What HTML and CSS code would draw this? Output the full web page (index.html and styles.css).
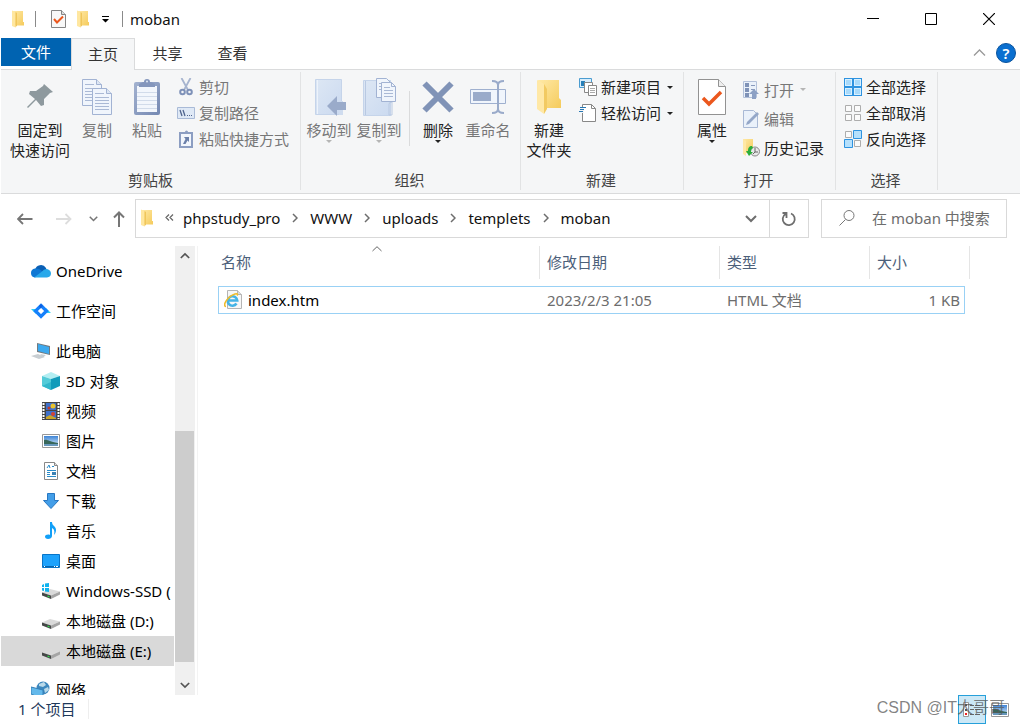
FILE: index.html
```html
<!DOCTYPE html>
<html lang="zh-CN">
<head>
<meta charset="utf-8">
<title>moban</title>
<link rel="stylesheet" href="styles.css">
</head>
<body>
<svg class="defs" aria-hidden="true">
  <defs>
    <linearGradient id="gold" x1="0" x2="1" y1="0" y2="1"><stop offset="0" stop-color="#ffe9a6"/><stop offset="1" stop-color="#f5cb5c"/></linearGradient>
    <linearGradient id="steel" x1="0" x2="1" y1="0" y2="1"><stop offset="0" stop-color="#a3b2d0"/><stop offset="1" stop-color="#7488b2"/></linearGradient>
    <linearGradient id="pale" x1="0" x2="1" y1="0" y2="1"><stop offset="0" stop-color="#dde7f4"/><stop offset="1" stop-color="#cbdaf0"/></linearGradient>
    <linearGradient id="sky" x1="0" x2="0" y1="0" y2="1"><stop offset="0" stop-color="#3d84d6"/><stop offset="1" stop-color="#e4f2fb"/></linearGradient>
    <symbol id="folder" viewBox="0 0 12 18"><path d="M1 1h10v11h1v3.500H3z" fill="url(#gold)"/><path d="M0 .500 3.500 2v15.500L0 16z" fill="#ffe7a0"/><path d="M3.500 2v15.500L5 15.500V3z" fill="#f0c65b"/></symbol>
    <symbol id="down" viewBox="0 0 6 3"><path d="M0 0h6L3 3z" fill="currentColor"/></symbol>
    <symbol id="chev" viewBox="0 0 6 10"><path d="M1 1l4 4-4 4" fill="none" stroke="#6d6d6d" stroke-width="1.500"/></symbol>
    <symbol id="chevdown" viewBox="0 0 12 8"><path d="M1 1l5 5 5-5" fill="none" stroke="currentColor" stroke-width="2"/></symbol>
    <symbol id="drive" viewBox="0 0 18 18"><path d="M0 10.500 8 7l10 2.500-9 4z" fill="#dadada"/><path d="M0 10.500 9 13.500v3.500L0 13.500z" fill="#454848"/><path d="M9 13.500l9-4v3L9 17z" fill="#a5a5a5"/><path d="M5.500 13.500l2 .7v1.300l-2-.7z" fill="#2fe04d"/></symbol>
    <symbol id="picture" viewBox="0 0 18 14"><path d="M.500.500h17v13H.500z" fill="#fff" stroke="#999"/><path d="M2 2h14v10H2z" fill="url(#sky)"/><path d="M2 6c4-1 5 2 14 3v1H2z" fill="#37675a"/><path d="M2 10h14v2H2z" fill="#6797bb"/></symbol>
    <symbol id="sheet" viewBox="0 0 20 27"><path d="M.500.500h14l5 5v21H.500z" fill="#f0f5fc" stroke="#a2b3d3"/><path d="M14.500.500v5h5" fill="#dce6f4" stroke="#a2b3d3"/><path d="M3 5.500h9M3 9.500h14M3 12.500h14M3 15.500h14M3 18.500h14M3 21.500h14" stroke="#aab9d5"/></symbol>
    <symbol id="checkpage" viewBox="0 0 28 36"><path d="M.500.500h20l7 7v28H.500z" fill="#fff" stroke="#929292"/><path d="M20.500.500v7h7" fill="#eee" stroke="#929292"/><path d="M5 19l6 6L23 13" fill="none" stroke="#eb571d" stroke-width="3.500"/></symbol>
  </defs>
</svg>

<div class="window">
  <header class="titlebar">
    <svg class="i-folder" width="12" height="18"><use href="#folder"/></svg>
    <span class="rule"></span>
    <button class="plain" aria-label="属性"><svg width="15" height="18" viewBox="0 0 15 18"><path d="M.500.500h10l4 4v13H.500z" fill="#f8f8f8" stroke="#858585"/><path d="M10.500.500v4h4" fill="#ddd" stroke="#858585"/><path d="M3 9l3 3.500L12 6.500" fill="none" stroke="#eb571d" stroke-width="2"/></svg></button>
    <button class="plain" aria-label="新建文件夹"><svg width="12" height="18"><use href="#folder"/></svg></button>
    <button class="plain quick-more" aria-label="自定义快速访问工具栏"><svg width="7" height="7" viewBox="0 0 7 7"><path d="M0 0h7v1H0zM0 3h7L3.500 6.500z"/></svg></button>
    <span class="rule dark"></span>
    <h1>moban</h1>
    <div class="controls">
      <button class="plain" aria-label="最小化"><svg width="12" height="12" viewBox="0 0 12 12"><path d="M0 5.500h12" stroke="#000"/></svg></button>
      <button class="plain" aria-label="最大化"><svg width="12" height="12" viewBox="0 0 12 12"><path d="M.500.500h11v11H.500z" fill="none" stroke="#000"/></svg></button>
      <button class="plain" aria-label="关闭"><svg width="12" height="12" viewBox="0 0 12 12"><path d="M0 0l12 12M12 0L0 12" stroke="#000" stroke-width="1.200"/></svg></button>
    </div>
  </header>

  <nav class="tabs">
    <button class="tab file">文件</button>
    <button class="tab active">主页</button>
    <button class="tab">共享</button>
    <button class="tab">查看</button>
    <div class="tab-tools">
      <button class="plain" aria-label="折叠功能区"><svg width="13" height="7" viewBox="0 0 13 7"><path d="M1 6.500l5.500-5.500L12 6.500" fill="none" stroke="#999" stroke-width="1.300"/></svg></button>
      <button class="plain help" aria-label="帮助">?</button>
    </div>
  </nav>

  <section class="ribbon">
    <div class="group clip">
      <div class="tools">
        <button class="big wide"><span class="pic"><svg width="26" height="26" viewBox="0 0 26 26"><path d="M17 0l9 8-3 1-6 6v6l-3 1-5-6-8 8-1-1 8-8-6-5 1-3 6 0 7-5z" fill="#8e999e"/></svg></span>固定到<br>快速访问</button>
        <button class="big" disabled><span class="pic"><svg width="30" height="36" viewBox="0 0 30 36"><use href="#sheet" width="20" height="27"/><use href="#sheet" x="10" y="9" width="20" height="27"/></svg></span>复制</button>
        <button class="big" disabled><span class="pic"><svg width="26" height="37" viewBox="0 0 26 37"><rect y="4" width="26" height="33" rx="2" fill="url(#steel)"/><path d="M3 8h20v26H3z" fill="#f2f6fc"/><path d="M3 14.500h20M3 18.500h20M3 22.500h20M3 26.500h20M3 30.500h20" stroke="#d1dbea"/><path d="M5 9V6l4-2h1a3 3 0 0 1 6 0h1l4 2v3z" fill="#8496bc"/><circle cx="13" cy="3.500" r="1" fill="#dfe7f4"/></svg></span>粘贴</button>
        <div class="stack">
          <button class="small" disabled><span class="mini"><svg width="14" height="18" viewBox="0 0 14 18"><path d="M2.500 0l6.500 12M11.500 0L5 12" stroke="#a6b4cf" stroke-width="1.800"/><circle cx="3.500" cy="14" r="2.300" fill="none" stroke="#7e91b8" stroke-width="2"/><circle cx="10.500" cy="14" r="2.300" fill="none" stroke="#7e91b8" stroke-width="2"/></svg></span>剪切</button>
          <button class="small" disabled><span class="mini"><svg width="18" height="12" viewBox="0 0 18 12"><path d="M.500.500h17v11H.500z" fill="#dfe9f6" stroke="#a9bad7"/><path d="M3 3l2 6M6 3l2 6" stroke="#50658f" stroke-width="1.300"/><path d="M10 8h1v1h-1zM12 8h1v1h-1zM14 8h1v1h-1z" fill="#50658f"/></svg></span>复制路径</button>
          <button class="small" disabled><span class="mini"><svg width="14" height="18" viewBox="0 0 14 18"><path d="M1 3h12v14H1z" fill="#f2f6fc" stroke="#8c9ec2" stroke-width="2"/><path d="M4 4V2h2a1.500 1.500 0 0 1 3 0h2v2z" fill="#8c9ec2"/><path d="M5 7h5v5L8.500 10.500 6.500 14H4l2.500-5z" fill="#6b80aa"/></svg></span>粘贴快捷方式</button>
        </div>
      </div>
      <div class="caption">剪贴板</div>
    </div>

    <div class="group organize">
      <div class="tools">
        <button class="big" disabled><span class="pic"><svg width="34" height="38" viewBox="0 0 34 38"><path d="M3.500 1.500h26v35h-26z" fill="url(#pale)" stroke="#c5d4ea"/><path d="M5.500 2v34" stroke="#edf3fb"/><path d="M27 23h4v14h-4z" fill="#cfdcef"/><path d="M15 28l10-10v6h9v8h-9v6z" fill="#9aabca"/></svg></span>移动到<svg class="drop" width="6" height="3"><use href="#down"/></svg></button>
        <button class="big" disabled><span class="pic"><svg width="34" height="38" viewBox="0 0 34 38"><path d="M1.500 2.500h27v35h-27z" fill="url(#pale)" stroke="#c5d4ea"/><path d="M3.500 3v34M27 37V26q0-2 3-2v13z" fill="none" stroke="#b9c9e2"/><path d="M14.500.500h10l4 4v15h-14z" fill="#f0f5fc" stroke="#a2b3d3"/><path d="M17 5.500h6M17 8.500h4M17 11.500h4" stroke="#aab9d5"/><path d="M19.500 4.500h10l4 4v15h-14z" fill="#f0f5fc" stroke="#a2b3d3"/><path d="M29.500 4.500v4h4" fill="none" stroke="#a2b3d3"/><path d="M22 9.500h6M22 12.500h9M22 15.500h9M22 18.500h9" stroke="#aab9d5"/></svg></span>复制到<svg class="drop" width="6" height="3"><use href="#down"/></svg></button>
        <span class="divider"></span>
        <button class="big"><span class="pic"><svg width="32" height="32" viewBox="0 0 32 32"><path d="M2.500 2.500l27 27M29.500 2.500l-27 27" stroke="#8093b7" stroke-width="6"/></svg></span>删除<svg class="drop" width="6" height="3"><use href="#down"/></svg></button>
        <button class="big" disabled><span class="pic"><svg width="36" height="34" viewBox="0 0 36 34"><path d="M.500 9.500h35v14H.500z" fill="#f0f5fc" stroke="#9fb0cf"/><path d="M3 12h18v9H3z" fill="#9aabca"/><path d="M22 1c4 0 6 1 6 4v24c0 3-2 4-6 4M34 1c-4 0-6 1-6 4v24c0 3 2 4 6 4" fill="none" stroke="#9aabca" stroke-width="2"/></svg></span>重命名</button>
      </div>
      <div class="caption">组织</div>
    </div>

    <div class="group create">
      <div class="tools">
        <button class="big roomy"><span class="pic"><svg width="24" height="36" viewBox="0 0 24 36"><path d="M1 1h21v18l2 2v8H7z" fill="url(#gold)"/><path d="M0 1l7 4v30l-7-5z" fill="#ffe8a6"/><path d="M7 5v30l3-5V10l-3-5z" fill="#f2ca62"/></svg></span>新建<br>文件夹</button>
        <div class="stack">
          <button class="small"><span class="mini"><svg width="18" height="18" viewBox="0 0 18 18"><path d="M.500.500h12v9H.500z" fill="#d8edfc" stroke="#4b9cd0"/><path d="M2 3h4v5H2z" fill="#2680b9"/><path d="M5.500 4.500h8v10h-8z" fill="#fff" stroke="#888"/><path d="M9.500 7.500h8v10h-8z" fill="#fff" stroke="#888"/><path d="M11 10.500h5M11 12.500h5M11 14.500h5" stroke="#aaa"/></svg></span>新建项目<svg class="side" width="6" height="3"><use href="#down"/></svg></button>
          <button class="small"><span class="mini"><svg width="18" height="18" viewBox="0 0 18 18"><path d="M3.500.500h9l4 4v13h-13z" fill="#fff" stroke="#888"/><path d="M12.500.500v4h4" fill="none" stroke="#888"/><path d="M0 3h5v6H0z" fill="#f5f6f7"/><path d="M1 3.500h6M1 5.500h4M0 7.500h4" stroke="#2878b4"/></svg></span>轻松访问<svg class="side" width="6" height="3"><use href="#down"/></svg></button>
        </div>
      </div>
      <div class="caption">新建</div>
    </div>

    <div class="group open">
      <div class="tools">
        <button class="big roomy"><span class="pic"><svg width="28" height="36"><use href="#checkpage"/></svg></span>属性<svg class="drop" width="6" height="3"><use href="#down"/></svg></button>
        <div class="stack tall">
          <button class="small" disabled><span class="mini"><svg width="18" height="18" viewBox="0 0 18 18"><path d="M1.500.500h13v16h-13z" fill="#eaf1fa" stroke="#b3c1da"/><path d="M3 2h4v4H3zM3 7h4v4H3zM3 12h4v4H3z" fill="#7f92b7"/><path d="M9 4.500h4M9 8.500h4" stroke="#8799bc"/><path d="M7 13l5-5 5 5h-3v5h-4v-5z" fill="#8ca0c4"/></svg></span>打开<svg class="side" width="6" height="3"><use href="#down"/></svg></button>
          <button class="small" disabled><span class="mini"><svg width="18" height="18" viewBox="0 0 18 18"><path d="M1.500.500h10l4 4v13h-14z" fill="#eaf1fa" stroke="#a9b9d5"/><path d="M4 15l1-3L15 2l2 2L7 14z" fill="#94a7c8"/></svg></span>编辑</button>
          <button class="small"><span class="mini"><svg width="18" height="18" viewBox="0 0 18 18"><path d="M1 0h10v14H1z" fill="url(#gold)"/><path d="M1 0l3 2v15l-3-2z" fill="#ffe8a6"/><circle cx="13" cy="12.500" r="4.500" fill="#e9e9e9" stroke="#878787"/><path d="M13 9v4h3M13 13l-2 2" fill="none" stroke="#666"/><path d="M10 7c-3 0-4 2-4 5H4l3 5 4-4H9c0-2 0-3 2-4z" fill="#2cae3b"/></svg></span>历史记录</button>
        </div>
      </div>
      <div class="caption">打开</div>
    </div>

    <div class="group select">
      <div class="tools">
        <div class="stack">
          <button class="small"><span class="mini"><svg width="18" height="18" viewBox="0 0 18 18"><path d="M0 0h18v18H0z" fill="#2e93e0"/><path d="M1 1h7v7H1zM10 1h7v7h-7zM1 10h7v7H1zM10 10h7v7h-7z" fill="#d9f0ff"/><path d="M2 2h5v5H2zM11 2h5v5h-5zM2 11h5v5H2zM11 11h5v5h-5z" fill="#a8dafb"/></svg></span>全部选择</button>
          <button class="small"><span class="mini"><svg width="18" height="18" viewBox="0 0 18 18"><path d="M1.500 1.500h6v6h-6zM10.500 1.500h6v6h-6zM1.500 10.500h6v6h-6zM10.500 10.500h6v6h-6z" fill="#fbfbfb" stroke="#adadad"/></svg></span>全部取消</button>
          <button class="small"><span class="mini"><svg width="18" height="18" viewBox="0 0 18 18"><path d="M1.500 1.500h6v6h-6zM10.500 10.500h6v6h-6z" fill="#fbfbfb" stroke="#adadad"/><path d="M9.500.500h8v8h-8zM.500 9.500h8v8h-8z" fill="#b5e0fc" stroke="#2e93e0"/></svg></span>反向选择</button>
        </div>
      </div>
      <div class="caption">选择</div>
    </div>
  </section>

  <section class="location">
    <div class="history">
      <button class="plain" aria-label="后退"><svg width="16" height="12" viewBox="0 0 16 12"><path d="M15.500 6H1M6 1L1 6l5 5" fill="none" stroke="#767676" stroke-width="1.800"/></svg></button>
      <button class="plain" aria-label="前进"><svg width="16" height="12" viewBox="0 0 16 12"><path d="M0 6h14.500M9.500 1l5 5-5 5" fill="none" stroke="#ddd" stroke-width="1.800"/></svg></button>
      <button class="plain recent" aria-label="最近位置"><svg width="9" height="6"><use href="#chevdown"/></svg></button>
      <button class="plain up" aria-label="上移"><svg width="12" height="16" viewBox="0 0 12 16"><path d="M6 16V1M1 6.500L6 1.500l5 5" fill="none" stroke="#767676" stroke-width="2"/></svg></button>
    </div>
    <div class="address">
      <div class="crumbs">
        <svg width="12" height="18"><use href="#folder"/></svg>
        <svg class="more" width="9" height="7" viewBox="0 0 9 7"><path d="M4 .500l-3 3 3 3M8 .500l-3 3 3 3" fill="none" stroke="#666" stroke-width="1.200"/></svg>
        <a href="#">phpstudy_pro</a><span class="sep"><svg width="6" height="10"><use href="#chev"/></svg></span>
        <a href="#">WWW</a><span class="sep"><svg width="6" height="10"><use href="#chev"/></svg></span>
        <a href="#">uploads</a><span class="sep"><svg width="6" height="10"><use href="#chev"/></svg></span>
        <a href="#">templets</a><span class="sep"><svg width="6" height="10"><use href="#chev"/></svg></span>
        <a href="#">moban</a>
      </div>
      <button class="plain expand" aria-label="以前的位置"><svg width="12" height="8"><use href="#chevdown"/></svg></button>
      <button class="plain refresh" aria-label="刷新"><svg width="16" height="16" viewBox="0 0 16 16"><path d="M10 2.500A6 6 0 1 1 4.500 3M1.500 2h4v5" fill="none" stroke="#6e6e6e" stroke-width="1.800"/></svg></button>
    </div>
    <label class="search">
      <svg width="16" height="16" viewBox="0 0 16 16"><circle cx="10" cy="5.500" r="5" fill="none" stroke="#777"/><path d="M6.500 9.500L.500 15.500" stroke="#777"/></svg>
      <input type="text" placeholder="在 moban 中搜索" aria-label="搜索">
    </label>
  </section>

  <main class="content">
    <nav class="tree">
      <a href="#" class="node root"><svg width="20" height="14" viewBox="0 0 20 14"><path d="M4 6a6 6 0 0 1 11-2l1 3-8 4z" fill="#0a5fb5"/><path d="M4 4.500Q0 5 0 9q0 4 4 4.500l8-5Q9 4 4 4.500z" fill="#0f78d4"/><path d="M11 7.500Q13 4.500 16 5q4 1 4 4.500t-4 4H3z" fill="#28a8ea"/></svg>OneDrive</a>
      <a href="#" class="node root"><svg width="20" height="16" viewBox="0 0 20 16"><path d="M0 6h4l3 3-2 2zM20 10h-4l-3-3 2-2z" fill="#2bd0f5"/><path d="M10 2.500L15.500 8 10 13.500 4.500 8z" fill="none" stroke="#1680fb" stroke-width="3.200"/><path d="M10 1l2 2-2.500 2.500L8 3z" fill="#0e5fe0"/></svg>工作空间</a>
      <a href="#" class="node root"><svg width="20" height="18" viewBox="0 0 20 18"><path d="M6 1l13 3v9L6 10z" fill="#727a7f"/><path d="M7 2l11 3v7L7 9z" fill="#3ca9ef"/><path d="M0 14l7-2 7 3-6 2zM9 12l6 1-3 2z" fill="#c8ced2"/></svg>此电脑</a>
      <a href="#" class="node"><svg width="18" height="18" viewBox="0 0 18 18"><path d="M0 4l9-4 9 4-9 3z" fill="#b3eef2"/><path d="M0 4l9 3v11l-9-4z" fill="#53cbd8"/><path d="M18 4L9 7v11l9-4z" fill="#119bba"/><path d="M0 14l9-4v8z" fill="#32b7cb"/></svg>3D 对象</a>
      <a href="#" class="node"><svg width="18" height="18" viewBox="0 0 18 18"><path d="M0 0h18v18H0z" fill="#444"/><path d="M4 1h10v7H4zM4 9h10v8H4z" fill="#3e70cb"/><path d="M1.500 1v16M16.500 1v16" stroke="#fff" stroke-width="2" stroke-dasharray="2 1"/><circle cx="11" cy="4" r="2.500" fill="#e9c22c"/><circle cx="7" cy="6" r="1.500" fill="#c33b2c"/><circle cx="11" cy="12" r="2" fill="#d74232"/><path d="M4 15l4-2 6 3v1H4z" fill="#caa527"/></svg>视频</a>
      <a href="#" class="node"><svg width="18" height="14"><use href="#picture"/></svg>图片</a>
      <a href="#" class="node"><svg width="18" height="18" viewBox="0 0 18 18"><path d="M2.500.500h10l3 3v14h-13z" fill="#fff" stroke="#888"/><path d="M12.500.500v3h3" fill="#ddd" stroke="#888"/><path d="M5 6l2-3 1 3M10 4.500h2M5 8.500h9M5 10.500h3M5 12.500h3M5 14.500h9" fill="none" stroke="#298cca"/><path d="M10 10h4v3h-4z" fill="#3b81b3"/></svg>文档</a>
      <a href="#" class="node"><svg width="18" height="18" viewBox="0 0 18 18"><path d="M5.500 1.500h7v7h4L9 16.500 1.500 8.500h4z" fill="#439ee8" stroke="#2777c2"/></svg>下载</a>
      <a href="#" class="node"><svg width="18" height="18" viewBox="0 0 18 18"><path d="M8 0h2c0 4 4 4 4 8 0 2-1 4-2 5 1-4 0-6-2-7v8c0 2-2 3-4 3s-3-1-3-2.500C3 13 6 12 8 13z" fill="#12a0f8"/></svg>音乐</a>
      <a href="#" class="node"><svg width="18" height="14" viewBox="0 0 18 14"><path d="M.500.500h17v13H.500z" fill="#1ea2fb" stroke="#0875c8"/><path d="M1 12h16v1H1z" fill="#0764ad"/><path d="M2 12h1v1H2zM12 12h1v1h-1zM14 12h2v1h-2z" fill="#fff"/></svg>桌面</a>
      <a href="#" class="node"><svg width="18" height="18" viewBox="1 0 18 18"><use href="#drive" x="1" width="18" height="18"/><path d="M1 3l2-1v3H1zM4 1.500L8 1v4H4zM1 6h2v3l-2-.500zM4 6h4v4l-4-.500z" fill="#10b3ee"/></svg>Windows-SSD (</a>
      <a href="#" class="node"><svg width="18" height="18"><use href="#drive"/></svg>本地磁盘 (D:)</a>
      <a href="#" class="node current"><svg width="18" height="18"><use href="#drive"/></svg>本地磁盘 (E:)</a>
      <a href="#" class="node root"><svg width="20" height="18" viewBox="0 0 20 18"><circle cx="12" cy="7" r="6.500" fill="#3c87bd"/><path d="M8 3l5-2 2 3-3 2-4-1zM13 8l4-2 1 3-4 3z" fill="#b9d9e9"/><path d="M0 6l12 3v6L7 16 0 13z" fill="#64b9eb" stroke="#347fb6"/></svg>网络</a>
    </nav>
    <div class="scrollbar" aria-hidden="true">
      <span class="arrow flip"><svg width="10" height="7"><use href="#chevdown"/></svg></span>
      <span class="before"></span><span class="thumb"></span><span class="after"></span>
      <span class="arrow"><svg width="10" height="7"><use href="#chevdown"/></svg></span>
    </div>
    <section class="listing">
      <table>
        <colgroup><col class="c-name"><col class="c-date"><col class="c-type"><col class="c-size"><col class="c-end"></colgroup>
        <thead><tr>
          <th>名称<svg class="sort" width="10" height="6" viewBox="0 0 10 6"><path d="M.500 5L5 .700 9.500 5" fill="none" stroke="#666"/></svg></th><th>修改日期</th><th>类型</th><th class="no-rule">大小</th><th></th>
        </tr></thead>
        <tbody><tr>
          <td><a href="#" class="file-name"><svg width="18" height="20" viewBox="0 0 18 20"><path d="M3.500.500h10l4 4v14h-14z" fill="#f7f7f7" stroke="#b5b5b5"/><path d="M13.500.500v4h4" fill="#ddd" stroke="#b5b5b5"/><path d="M12.500 13.500a4.700 4.700 0 1 1 .700-3H5" fill="none" stroke="#45b4e6" stroke-width="2.600"/><path d="M2 16.500c-4 0 1-10 9-12.500 2-.600 3 0 2 1.500" fill="none" stroke="#efbc2c" stroke-width="1.600"/></svg>index.htm</a></td><td>2023/2/3 21:05</td><td>HTML 文档</td><td class="size">1 KB</td><td></td>
        </tr></tbody>
      </table>
    </section>
  </main>

  <footer class="status">
    <span class="count">1 个项目</span>
    <div class="views">
      <button class="plain view on" aria-label="详细信息"><svg width="18" height="18" viewBox="0 0 18 18"><path d="M.500 1.500h5v14h-5z" fill="#fff" stroke="#999"/><path d="M2 3h2v2H2zM2 8h2v2H2z" fill="#555"/><path d="M2 12h2v2H2z" fill="#e22"/><path d="M7 4.500h4M12 4.500h5M7 8.500h4M12 8.500h5M7 13.500h4M12 13.500h5" stroke="#666"/></svg></button>
      <button class="plain view" aria-label="大缩略图"><svg width="18" height="14"><use href="#picture"/></svg></button>
    </div>
    <span class="watermark">CSDN @IT大哥哥</span>
  </footer>
</div>
</body>
</html>
```

FILE: styles.css
```css
* { box-sizing: border-box; }

body {
  margin: 0;
  background: #fff;
  color: #111;
  font: 15px/20px "Noto Sans", "Noto Sans CJK SC", sans-serif;
}

svg { display: block; flex: none; }
.defs { position: absolute; width: 0; height: 0; }
a { color: inherit; text-decoration: none; }
button, input { font: inherit; color: inherit; }

button {
  margin: 0;
  padding: 0;
  border: 0;
  background: none;
}

.plain { display: flex; align-items: center; justify-content: center; }

.window {
  display: flex;
  flex-direction: column;
  height: 100vh;
  padding-left: 1px;
}

/* Title bar */
.titlebar {
  display: flex;
  align-items: center;
  height: 38px;
  padding: 0 2px 0 11px;
  gap: 11px;
}
.titlebar .rule { width: 1px; height: 16px; background: #8a8a8a; margin-right: 4px; }
.titlebar .rule.dark { margin: 0 -4px 0 1px; }
.titlebar h1 { margin: 0; font-size: 15px; font-weight: 400; }
.quick-more { width: 10px; }
.controls { display: flex; margin-left: auto; }
.controls .plain { width: 58px; height: 38px; }

/* Tabs */
.tabs { display: flex; height: 32px; border-bottom: 1px solid #dadbdc; }
.tab { width: 65px; height: 31px; padding-bottom: 2px; color: #333; }
.tab.file { width: 70px; height: 28px; padding: 0; background: #0063b1; color: #fff; }
.tab.active {
  width: 64px;
  height: 32px;
  border: 1px solid #dadbdc;
  border-bottom: 0;
  background: #f5f6f7;
}
.tab-tools { display: flex; align-items: center; gap: 10px; margin-left: auto; padding: 0 4px 2px 0; }
.help {
  width: 20px;
  height: 20px;
  border: 1px solid #0a539d;
  border-radius: 50%;
  background: #0a6fd0;
  color: #fff;
  font-weight: 600;
}

/* Ribbon */
.ribbon {
  display: flex;
  padding: 2px 0 3px;
  border-bottom: 1px solid #dadbdc;
  background: #f5f6f7;
}
.group { display: flex; flex-direction: column; border-right: 1px solid #e2e3e4; }
.tools { display: flex; height: 98px; align-items: flex-start; }
.caption { padding-right: 2px; line-height: 20px; text-align: center; color: #444; }
.clip { width: 300px; }
.clip .tools { padding-left: 7px; }
.clip .caption { padding-right: 0; }
.organize { width: 220px; }
.organize .tools { padding-left: 3px; }
.create { width: 163px; }
.open { width: 152px; }
.select { width: 102px; }
.select .tools { padding-left: 8px; }

.big {
  display: block;
  width: 50px;
  padding-top: 1px;
  text-align: center;
  white-space: nowrap;
  color: #222;
}
.big.wide { width: 64px; }
.big.roomy { width: 56px; }
.big:disabled, .small:disabled { color: #777; }
.pic { display: flex; align-items: center; justify-content: center; height: 47px; }
.drop { margin: 0 auto; }
.big:disabled .drop, .small:disabled .side { color: #b5b5b5; }
.divider { width: 1px; height: 55px; margin: 19px 3px 0 5px; background: #dadbdc; }

.stack { display: grid; grid-auto-rows: 26px; padding: 2px 0 0 2px; }
.stack.tall { grid-auto-rows: 29px; padding-top: 3px; }
.clip .stack { padding-left: 5px; }
.select .stack { padding-left: 0; }
.small { display: flex; align-items: center; color: #222; white-space: nowrap; }
.mini { display: flex; justify-content: center; width: 18px; margin-right: 4px; }
.side { margin-left: 6px; }

/* Address bar */
.location { display: flex; height: 52px; padding: 5px 13px 8px 0; }
.history {
  display: flex;
  align-items: center;
  width: 134px;
  padding-left: 16px;
  color: #767676;
}
.history .plain + .plain { margin-left: 23px; }
.history .recent { width: 10px; }
.history .recent.plain { margin-left: 16px; }
.history .up.plain { margin-left: 15px; }
.address { display: flex; flex: 1; border: 1px solid #d9d9d9; }
.crumbs { display: flex; flex: 1; align-items: center; padding: 0 0 2px 5px; }
.more { margin: 0 9px 0 12px; }
.sep { display: flex; justify-content: center; width: 30px; }
.expand { width: 36px; color: #6e6e6e; }
.refresh { width: 39px; border-left: 1px solid #d9d9d9; }
.search {
  display: flex;
  align-items: center;
  width: 186px;
  margin-left: 12px;
  padding: 0 0 2px 17px;
  border: 1px solid #d9d9d9;
}
.search input {
  flex: 1;
  min-width: 0;
  padding: 0 0 0 17px;
  border: 0;
  outline: 0;
  background: none;
}
.search input::placeholder { color: #6d6d6d; opacity: 1; }

/* Main area */
.content { display: flex; flex: 1; min-height: 0; }
.tree { width: 174px; padding-top: 10px; border-right: 1px solid #fff; overflow: hidden; color: #000; }
.node {
  display: flex;
  align-items: center;
  gap: 6px;
  height: 30px;
  padding-left: 41px;
  white-space: nowrap;
}
.node.root { padding-left: 30px; gap: 5px; }
.root + .root { margin-top: 10px; }
.current { margin-bottom: 9px; background: #d9d9d9; }

.scrollbar { display: flex; flex-direction: column; width: 20px; background: #f0f0f0; color: #555; }
.arrow { display: flex; align-items: center; justify-content: center; height: 20px; }
.flip { transform: rotate(180deg); }
.before { flex: 165; }
.thumb { flex: 232; width: 19px; background: #cdcdcd; }
.after { flex: 13; }

.listing { flex: 1; margin-left: 2px; padding-left: 20px; border-left: 1px solid #f3f3f3; }
table { width: 752px; border-collapse: separate; border-spacing: 0; table-layout: fixed; color: #6d6d6d; }
.c-name { width: 322px; }
.c-date { width: 180px; }
.c-type { width: 150px; }
.c-size { width: 95px; }
.c-end { width: 5px; }
th {
  position: relative;
  height: 33px;
  padding: 0 0 2px 7px;
  border-right: 1px solid #e5e5e5;
  color: #4c607a;
  font-weight: 400;
  text-align: left;
}
th:first-child { padding-left: 3px; }
th:last-child { padding: 0; }
.no-rule { border-right: 0; }
.sort { position: absolute; top: 0; left: 50%; margin-left: -7px; }
tbody::before { content: ""; display: block; height: 7px; }
td { height: 28px; padding: 0 0 0 7px; border: solid #99d1f5; border-width: 1px 0; }
td:first-child { padding-left: 5px; border-left-width: 1px; }
td:last-child { padding: 0; border: 0; }
.size { padding: 0 4px 0 0; border-right-width: 1px; text-align: right; }
.file-name { display: flex; align-items: center; gap: 6px; color: #000; }

/* Status bar */
.status {
  position: relative;
  display: flex;
  height: 30px;
  padding-left: 17px;
  color: #1e395b;
}
.count { width: 71px; height: 20px; margin-top: 4px; border-right: 1px solid #eee; }
.views { display: flex; margin-left: auto; padding-right: 7px; }
.view { width: 27px; height: 29px; }
.view.on { width: 28px; border: 1px solid #26a0da; background: #cce8f6; }
.watermark { position: absolute; right: 15px; top: 3px; color: rgba(90, 90, 90, .75); font-family: "Liberation Sans", "Noto Sans CJK SC", sans-serif; font-size: 16px; pointer-events: none; }
```
